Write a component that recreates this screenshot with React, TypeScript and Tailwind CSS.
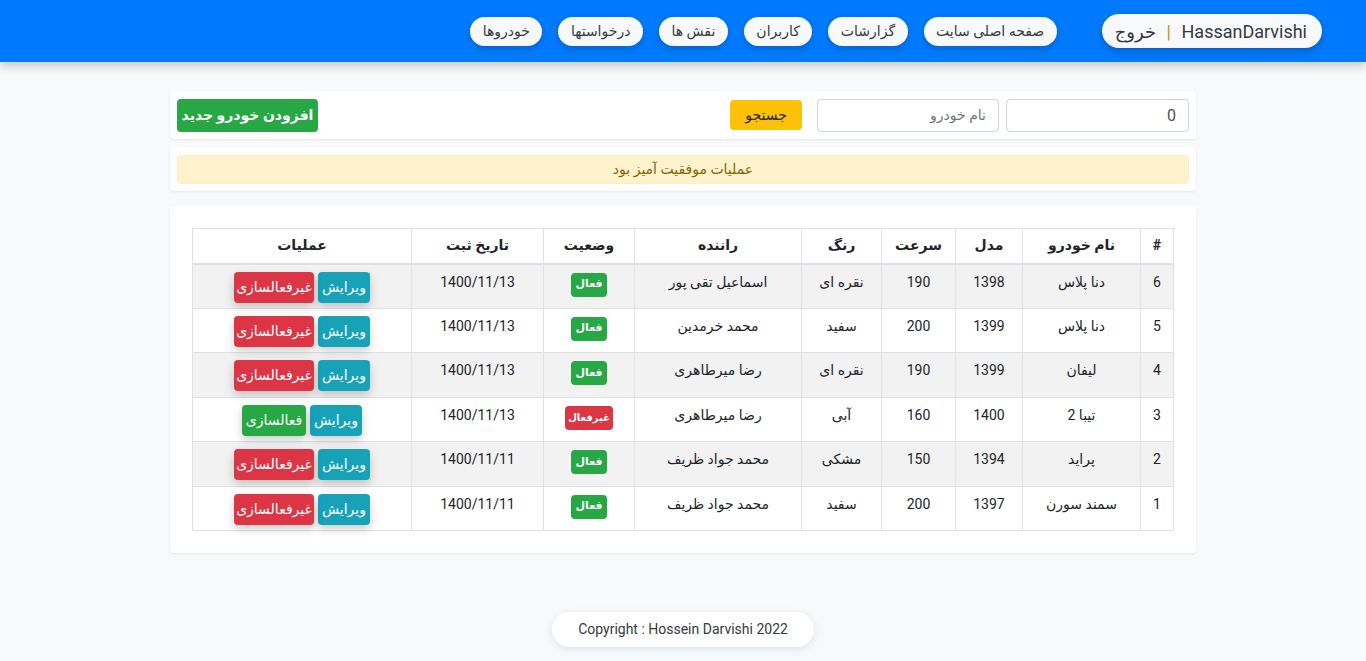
import React from "react";

const font = { fontFamily: "Roboto, 'DejaVu Sans', sans-serif" };

type Row = {
  id: number;
  name: string;
  model: string;
  speed: string;
  color: string;
  driver: string;
  active: boolean;
  date: string;
};

const rows: Row[] = [
  { id: 6, name: "دنا پلاس", model: "1398", speed: "190", color: "نقره ای", driver: "اسماعیل تقی پور", active: true, date: "1400/11/13" },
  { id: 5, name: "دنا پلاس", model: "1399", speed: "200", color: "سفید", driver: "محمد خرمدین", active: true, date: "1400/11/13" },
  { id: 4, name: "لیفان", model: "1399", speed: "190", color: "نقره ای", driver: "رضا میرطاهری", active: true, date: "1400/11/13" },
  { id: 3, name: "تیبا 2", model: "1400", speed: "160", color: "آبی", driver: "رضا میرطاهری", active: false, date: "1400/11/13" },
  { id: 2, name: "پراید", model: "1394", speed: "150", color: "مشکی", driver: "محمد جواد ظریف", active: true, date: "1400/11/11" },
  { id: 1, name: "سمند سورن", model: "1397", speed: "200", color: "سفید", driver: "محمد جواد ظریف", active: true, date: "1400/11/11" },
];

const navItems = ["صفحه اصلی سایت", "گزارشات", "کاربران", "نقش ها", "درخواستها", "خودروها"];

export default function App() {
  return (
    <div dir="rtl" style={font} className="min-h-[661px] bg-[#f8f9fa] text-[#212529]">
      {/* Navbar */}
      <div className="h-[62px] bg-[#007bff] shadow-[0_4px_10px_rgba(0,0,0,0.2)] flex items-center pr-[44px]">
        <div className="h-[34px] rounded-full bg-[#f8f9fa] shadow-[0_3px_8px_rgba(0,0,0,0.25)] flex items-center pr-[15px] pl-[13px] text-[18px] text-[#343a40]">
          <span dir="ltr">HassanDarvishi</span>
          <span className="mx-[10.5px] text-[#c8861e]">|</span>
          <span>خروج</span>
        </div>
        <div className="flex items-center gap-[16px] mr-[45px]">
          {navItems.map((n) => (
            <div
              key={n}
              className="h-[29px] rounded-full bg-[#f8f9fa] shadow-[0_3px_8px_rgba(0,0,0,0.2)] flex items-center px-[12.5px] text-[14px] text-[#343a40]"
            >
              {n}
            </div>
          ))}
        </div>
      </div>

      <div className="w-[1026px] mx-auto pt-[29px]">
        {/* Search card */}
        <div className="bg-white rounded-[4px] shadow-[0_1px_3px_rgba(0,0,0,0.08)] px-[7px] py-[7.5px] flex items-center justify-between">
          <div className="flex items-center">
            <input
              readOnly
              value="0"
              className="w-[183px] h-[33px] border border-[#ced4da] rounded-[4px] px-[12px] text-[16px] text-right text-[#495057] outline-none"
            />
            <input
              readOnly
              placeholder="نام خودرو"
              className="w-[182px] h-[33px] mr-[7px] border border-[#ced4da] rounded-[4px] px-[12px] text-[14px] text-right text-[#495057] placeholder:text-[#6c757d] outline-none"
            />
            <button className="w-[72px] h-[30px] mr-[15px] bg-[#ffc107] rounded-[4px] text-[14px] text-[#212529]">
              جستجو
            </button>
          </div>
          <button className="w-[141px] h-[33px] bg-[#28a745] rounded-[4px] text-[14px] font-semibold text-white">
            افزودن خودرو جدید
          </button>
        </div>

        {/* Alert card */}
        <div className="mt-[8px] bg-white rounded-[4px] shadow-[0_1px_3px_rgba(0,0,0,0.08)] px-[7px] py-[7.5px]">
          <div className="h-[29px] bg-[#fff3cd] border border-[#ffeeba] rounded-[4px] flex items-center justify-center text-[14px] text-[#856404]">
            عملیات موفقیت آمیز بود
          </div>
        </div>

        {/* Table card */}
        <div className="mt-[15px] bg-white rounded-[4px] shadow-[0_1px_3px_rgba(0,0,0,0.08)] p-[22px]">
          <table className="w-[981px] table-fixed border-collapse text-[14px]">
            <colgroup>
              <col className="w-[33px]" />
              <col className="w-[118px]" />
              <col className="w-[67px]" />
              <col className="w-[74px]" />
              <col className="w-[80px]" />
              <col className="w-[167px]" />
              <col className="w-[91px]" />
              <col className="w-[132px]" />
              <col className="w-[219px]" />
            </colgroup>
            <thead>
              <tr className="h-[35px]">
                {["#", "نام خودرو", "مدل", "سرعت", "رنگ", "راننده", "وضعیت", "تاریخ ثبت", "عملیات"].map((h) => (
                  <th
                    key={h}
                    className="border border-[#dee2e6] border-b-2 text-center font-bold text-[14px] text-[#212529] align-middle"
                  >
                    {h}
                  </th>
                ))}
              </tr>
            </thead>
            <tbody>
              {rows.map((r, i) => (
                <tr key={r.id} className={i % 2 === 0 ? "bg-[#f2f2f2] h-[44.5px]" : "bg-white h-[44.5px]"}>
                  <td className="border border-[#dee2e6] align-top pt-[6px] text-center leading-[22px]">{r.id}</td>
                  <td className="border border-[#dee2e6] align-top pt-[6px] text-center leading-[22px]">{r.name}</td>
                  <td className="border border-[#dee2e6] align-top pt-[6px] text-center leading-[22px]">{r.model}</td>
                  <td className="border border-[#dee2e6] align-top pt-[6px] text-center leading-[22px]">{r.speed}</td>
                  <td className="border border-[#dee2e6] align-top pt-[6px] text-center leading-[22px]">{r.color}</td>
                  <td className="border border-[#dee2e6] align-top pt-[6px] text-center leading-[22px]">{r.driver}</td>
                  <td className="border border-[#dee2e6] align-top pt-[8px] text-center">
                    <div className="flex justify-center">
                      {r.active ? (
                        <span className="w-[36px] h-[24px] bg-[#28a745] rounded-[4px] text-white text-[11px] font-bold flex items-center justify-center">
                          فعال
                        </span>
                      ) : (
                        <span className="w-[48px] h-[24px] bg-[#dc3545] rounded-[4px] text-white text-[10px] font-bold flex items-center justify-center">
                          غیرفعال
                        </span>
                      )}
                    </div>
                  </td>
                  <td className="border border-[#dee2e6] align-top pt-[6px] text-center leading-[22px]">{r.date}</td>
                  <td className="border border-[#dee2e6] align-top pt-[7px]">
                    <div className="flex justify-center gap-[4px]">
                      <button className="w-[52px] h-[31px] bg-[#17a2b8] rounded-[4px] text-white text-[14px] shadow-[0_4px_10px_rgba(0,0,0,0.2)]">
                        ویرایش
                      </button>
                      {r.active ? (
                        <button className="w-[80px] h-[31px] bg-[#dc3545] rounded-[4px] text-white text-[14px] shadow-[0_4px_10px_rgba(0,0,0,0.2)]">
                          غیرفعالسازی
                        </button>
                      ) : (
                        <button className="w-[64px] h-[31px] bg-[#28a745] rounded-[4px] text-white text-[14px] shadow-[0_4px_10px_rgba(0,0,0,0.2)]">
                          فعالسازی
                        </button>
                      )}
                    </div>
                  </td>
                </tr>
              ))}
            </tbody>
          </table>
        </div>

        {/* Footer */}
        <div className="flex justify-center pt-[59px] pb-[14px]">
          <div
            dir="ltr"
            className="w-[262px] h-[35px] rounded-full bg-white shadow-[0_2px_8px_rgba(0,0,0,0.1)] flex items-center justify-center text-[14px] text-[#343a40]"
          >
            Copyright : Hossein Darvishi 2022
          </div>
        </div>
      </div>
    </div>
  );
}
